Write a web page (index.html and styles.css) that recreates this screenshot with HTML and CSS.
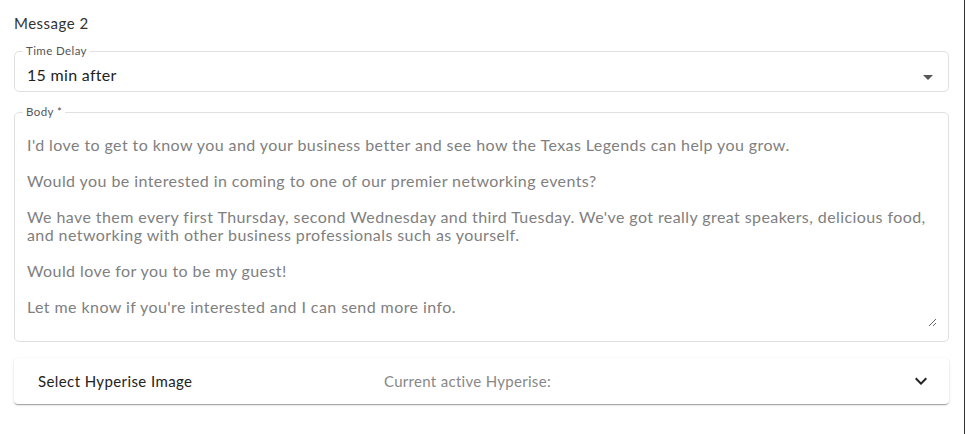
FILE: index.html
```html
<!DOCTYPE html>
<html lang="en">
  <head>
    <meta charset="UTF-8" />
    <meta name="viewport" content="width=device-width, initial-scale=1.0" />
    <title>Message 2</title>
    <link rel="stylesheet" href="styles.css">
  </head>
  <body>
    <div class="page">
      <h2 class="title">Message 2</h2>

      <fieldset class="field select-field">
        <legend>Time Delay</legend>
        <div class="select-value">15 min after</div>
        <svg class="select-arrow" width="24" height="24" viewBox="0 0 24 24">
          <path d="M7 10l5 5 5-5z" fill="#555" />
        </svg>
      </fieldset>

      <fieldset class="field body-field">
        <legend>Body *</legend>
        <div class="body-text">
          <p>I'd love to get to know you and your business better and see how the Texas Legends can help you grow.</p>
          <p>Would you be interested in coming to one of our premier networking events?</p>
          <p>We have them every first Thursday, second Wednesday and third Tuesday. We've got really great speakers, delicious food, and networking with other business professionals such as yourself.</p>
          <p>Would love for you to be my guest!</p>
          <p>Let me know if you're interested and I can send more info.</p>
        </div>
        <svg class="resize" width="9" height="9" viewBox="0 0 9 9">
          <path d="M8 1L1 8M8 5L5 8" stroke="#666" stroke-width="1" fill="none" />
        </svg>
      </fieldset>

      <div class="accordion">
        <span class="acc-title">Select Hyperise Image</span>
        <span class="acc-current">Current active Hyperise:</span>
        <svg class="acc-chevron" width="24" height="24" viewBox="0 0 24 24">
          <path d="M7.41 8.59L12 13.17l4.59-4.58L18 10l-6 6-6-6z" fill="#222" />
        </svg>
      </div>
    </div>
  </body>
</html>
```

FILE: styles.css
```css
* {
  margin: 0;
  padding: 0;
  box-sizing: border-box;
}
body {
  font-family: Lato, "Open Sans", sans-serif;
  background-color: #fff;
  color: #333;
}
.page {
  width: 965px;
  height: 434px;
  border-right: 1px solid #333;
  padding: 14px 15px 0 14px;
}
.title {
  font-size: 15px;
  font-weight: 400;
  letter-spacing: 0.5px;
  line-height: 18px;
  color: #333;
  margin-bottom: 13px;
}
.field {
  position: relative;
  border: 1px solid #e0e0e0;
  border-radius: 5px;
  padding: 0 12px;
}
.field legend {
  font-size: 11.5px;
  letter-spacing: 0.4px;
  color: #555;
  padding: 0 3px;
  margin-left: -4px;
  line-height: 12px;
}
.select-field {
  height: 47px;
  margin-bottom: 14px;
}
.select-value {
  font-size: 16px;
  letter-spacing: 0.3px;
  line-height: 20px;
  color: #222;
  padding-top: 8px;
}
.select-arrow {
  position: absolute;
  right: 8px;
  top: 8px;
}
.body-field {
  height: 236px;
  margin-bottom: 16px;
}
.body-text {
  padding-top: 18px;
  font-size: 16px;
  letter-spacing: 0.42px;
  line-height: 18px;
  color: #808080;
}
.body-text p {
  margin-bottom: 18px;
}
.resize {
  position: absolute;
  right: 11px;
  bottom: 14px;
}
.accordion {
  display: flex;
  align-items: center;
  height: 46px;
  padding: 0 24px;
  background: #fff;
  border-radius: 4px;
  box-shadow: 0 2px 1px -1px rgba(0, 0, 0, 0.2), 0 1px 1px 0 rgba(0, 0, 0, 0.14), 0 1px 3px 0 rgba(0, 0, 0, 0.12);
}
.acc-title {
  font-size: 15px;
  letter-spacing: 0.4px;
  color: #222;
  width: 346px;
}
.acc-current {
  font-size: 15px;
  letter-spacing: 0.3px;
  color: #888;
  flex: 1;
}
.acc-chevron {
  margin-right: -8px;
}
```
